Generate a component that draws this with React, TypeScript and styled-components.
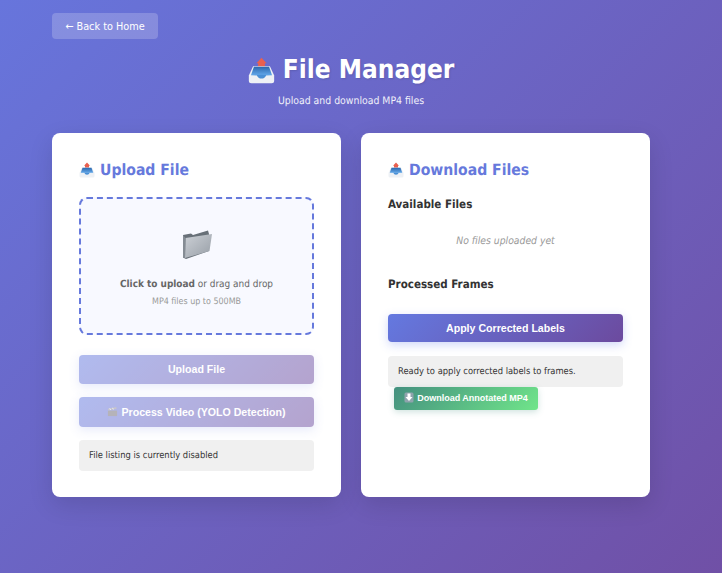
import { FC } from "react";
import styled, { createGlobalStyle } from "styled-components";

const GlobalStyle = createGlobalStyle`
	html, body {
		margin: 0;
		padding: 0;
		height: 100%;
	}
	body {
		font-family: "DejaVu Sans Condensed", "DejaVu Sans", Tahoma, sans-serif;
		background: #fff;
		overflow: hidden;
		text-rendering: geometricPrecision;
	}
	* {
		box-sizing: border-box;
	}
`;

const InboxIcon: FC<{ size: number; id: string }> = ({ size, id }) => (
	<svg width={size} height={size} viewBox='0 0 32 32'>
		<defs>
			<linearGradient id={id} x1='0' y1='0' x2='0' y2='1'>
				<stop offset='0' stopColor='#2b67ad' />
				<stop offset='1' stopColor='#62a8ea' />
			</linearGradient>
		</defs>
		<path d='M16 1 L22 7.5 L20 7.5 L20 13 L12 13 L12 7.5 L10 7.5 Z' fill='#e8604f' />
		<path d='M6 11 H26 L31 22 V28 Q31 31 28 31 H4 Q1 31 1 28 V22 Z' fill='#eef1f5' />
		<path d='M7 11.5 H25 L28.5 21.5 H3.5 Z' fill={`url(#${id})`} />
		<path d='M3.5 21.5 H10.5 Q12 25.5 16 25.5 Q20 25.5 21.5 21.5 H28.5 L16 21 Z' fill='#4a90d6' />
	</svg>
);

const FolderIcon: FC = () => (
	<svg width='30' height='29' viewBox='0 0 30 29'>
		<defs>
			<linearGradient id='folderFront' x1='0' y1='0' x2='1' y2='1'>
				<stop offset='0' stopColor='#ccd0d6' />
				<stop offset='1' stopColor='#979ea6' />
			</linearGradient>
		</defs>
		<path d='M1 5 L9 3.5 L11 5 L26 0.5 L27 4 L27 21 L4 29 L1 27.5 Z' fill='#687078' />
		<path d='M3.5 8 L30 4 L27.5 21 L3 28 Z' fill='url(#folderFront)' />
		<path d='M1 5 L3.5 8 L3 28 L1 27.5 Z' fill='#858c94' />
	</svg>
);

const ClapperIcon: FC = () => (
	<svg width='11' height='11' viewBox='0 0 12 12'>
		<path d='M1 5 H11 V11 H1 Z' fill='#6d6a76' />
		<path d='M1 3 L10 1 L10.5 3 L1.5 5 Z' fill='#8f8c98' />
		<path d='M3 2.6 L4 4.4 M6 2 L7 3.8' stroke='#e8e6ec' strokeWidth='1' />
	</svg>
);

const ArrowBoxIcon: FC = () => (
	<svg width='10' height='11' viewBox='0 0 10 11'>
		<rect x='0.5' y='0.5' width='9' height='10' rx='1.5' fill='#8fa3ad' />
		<path d='M3.5 1.5 H6.5 V5 H8.5 L5 9 L1.5 5 H3.5 Z' fill='#fff' />
	</svg>
);

const App: FC = () => {
	return (
		<>
			<GlobalStyle />
			<Page>
				<Container>
					<BackButton>← Back to Home</BackButton>
					<Header>
						<Title>
							<InboxIcon size={27} id='trayTitle' />
							File Manager
						</Title>
						<Subtitle>Upload and download MP4 files</Subtitle>
					</Header>
					<Columns>
						<Card>
							<CardTitle>
								<InboxIcon size={16} id='trayUpload' />
								Upload File
							</CardTitle>
							<DropZone>
								<FolderIcon />
								<DropText>
									<strong>Click to upload</strong> or drag and drop
								</DropText>
								<DropHint>MP4 files up to 500MB</DropHint>
							</DropZone>
							<ActionButton $disabled $height={29} $top={20}>
								Upload File
							</ActionButton>
							<ActionButton $disabled $height={30} $top={13}>
								<ClapperIcon /> Process Video (YOLO Detection)
							</ActionButton>
							<StatusBox $top={13}>File listing is currently disabled</StatusBox>
						</Card>
						<Card>
							<CardTitle>
								<InboxIcon size={16} id='trayDownload' />
								Download Files
							</CardTitle>
							<SectionTitle>Available Files</SectionTitle>
							<EmptyText>No files uploaded yet</EmptyText>
							<SectionTitle>Processed Frames</SectionTitle>
							<ActionButton $height={28} $top={22}>
								Apply Corrected Labels
							</ActionButton>
							<StatusBox $top={14}>Ready to apply corrected labels to frames.</StatusBox>
							<DownloadButton>
								<ArrowBoxIcon /> Download Annotated MP4
							</DownloadButton>
						</Card>
					</Columns>
				</Container>
			</Page>
		</>
	);
};

const Page = styled.div`
	height: 573px;
	overflow: hidden;
	padding: 13px 0 0 52px;
	background: linear-gradient(135deg, #6775dc 0%, #7050a6 100%);
`;

const Container = styled.div`
	width: 598px;
`;

const BackButton = styled.button`
	display: block;
	width: 106px;
	height: 26px;
	padding: 0;
	border: none;
	border-radius: 4px;
	background: rgba(255, 255, 255, 0.2);
	color: #fff;
	font-family: inherit;
	font-size: 10.8px;
`;

const Header = styled.header`
	margin-top: 14px;
	padding-top: 1px;
	text-align: center;
	color: #fff;
`;

const Title = styled.h1`
	display: flex;
	align-items: center;
	justify-content: center;
	gap: 8px;
	margin: 0;
	height: 32px;
	font-size: 26px;
	font-weight: 700;
	line-height: 32px;
	text-shadow: 1px 1px 2px rgba(0, 0, 0, 0.12);
`;

const Subtitle = styled.p`
	margin: 8px 0 0;
	font-size: 10.4px;
	line-height: 14px;
	opacity: 0.9;
`;

const Columns = styled.div`
	display: grid;
	grid-template-columns: 289px 289px;
	gap: 20px;
	margin-top: 25px;
`;

const Card = styled.section`
	height: 364px;
	padding: 26px 27px;
	border-radius: 8px;
	background: #fff;
	box-shadow: 0 8px 24px rgba(0, 0, 0, 0.12);
`;

const CardTitle = styled.h2`
	display: flex;
	align-items: center;
	gap: 5px;
	margin: 0;
	height: 22px;
	font-size: 15.6px;
	font-weight: 700;
	line-height: 22px;
	color: #6679dc;
`;

const DropZone = styled.div`
	display: flex;
	flex-direction: column;
	align-items: center;
	height: 138px;
	margin-top: 16px;
	padding-top: 31px;
	border: 2px dashed #6679dc;
	border-radius: 8px;
	background: #f8f9ff;
`;

const DropText = styled.p`
	margin: 19px 0 0;
	font-size: 9.95px;
	line-height: 14px;
	color: #666;
`;

const DropHint = styled.p`
	margin: 4px 0 0;
	font-size: 8.9px;
	line-height: 12px;
	color: #999;
`;

const ActionButton = styled.button<{ $disabled?: boolean; $height: number; $top: number }>`
	display: flex;
	align-items: center;
	justify-content: center;
	gap: 3px;
	width: 100%;
	height: ${(p) => p.$height}px;
	margin-top: ${(p) => p.$top}px;
	padding: 0 0 1px;
	border: none;
	border-radius: 4px;
	background: linear-gradient(135deg, #6479e0 0%, #6c4a9e 100%);
	opacity: ${(p) => (p.$disabled ? 0.5 : 1)};
	box-shadow: 0 3px 10px rgba(102, 126, 234, 0.3);
	color: #fff;
	font-family: "Liberation Sans", Arial, sans-serif;
	font-size: 10.6px;
	font-weight: 700;
`;

const StatusBox = styled.div<{ $top: number }>`
	height: 31px;
	margin-top: ${(p) => p.$top}px;
	padding: 0 10px;
	border-radius: 4px;
	background: #f0f0f0;
	color: #333;
	font-size: 9.3px;
	line-height: 31px;
`;

const SectionTitle = styled.h3`
	margin: 15px 0 0;
	height: 16px;
	font-size: 11.5px;
	font-weight: 700;
	line-height: 16px;
	color: #333;
`;

const EmptyText = styled.p`
	margin: 22px 0 28px;
	height: 14px;
	font-size: 10.3px;
	font-style: italic;
	line-height: 14px;
	text-align: center;
	color: #999;
`;

const DownloadButton = styled.button`
	display: flex;
	align-items: center;
	justify-content: center;
	gap: 3px;
	width: 144px;
	height: 23px;
	margin-left: 6px;
	padding: 0 0 2px;
	border: none;
	border-radius: 3px;
	background: linear-gradient(135deg, #44907f 0%, #70e58a 100%);
	box-shadow: 0 2px 6px rgba(68, 144, 127, 0.25);
	color: #fff;
	font-family: "Liberation Sans", Arial, sans-serif;
	font-size: 9px;
	font-weight: 700;
`;

export default App;
